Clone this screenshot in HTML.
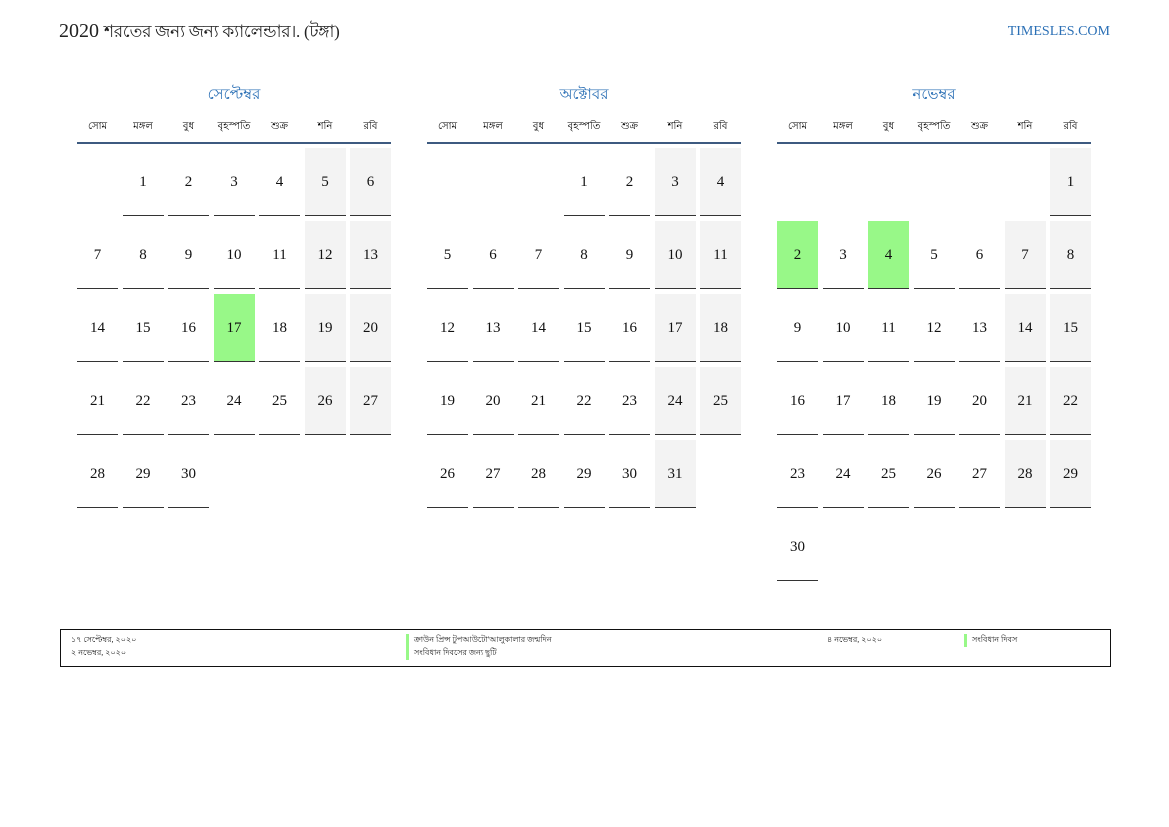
<!DOCTYPE html>
<html><head><meta charset="utf-8"><style>
body{margin:0;width:1169px;height:827px;background:#fff;position:relative;font-family:"Liberation Serif",serif;overflow:hidden}
.t{position:absolute;left:59px;top:19px;font-size:20px;color:#222;font-family:"Liberation Serif","Noto Sans CJK SC",serif;white-space:nowrap}
.t .b{font-size:17px;letter-spacing:-0.3px}
.site{position:absolute;right:59px;top:24px;font-size:14px;color:#2a6fb5}
.m{position:absolute;top:83px;width:314px}
.mt{text-align:center;color:#2a6fb5;font-size:15px;height:24px}
.wd{display:grid;grid-template-columns:repeat(7,41px);column-gap:4.5px;font-size:10px;text-align:center;height:35px;line-height:40px;border-bottom:2px solid #3d5a80;font-family:"Liberation Sans",sans-serif}
.g{display:grid;grid-template-columns:repeat(7,41px);column-gap:4.5px;row-gap:5px;grid-auto-rows:68px;margin-top:4px}
.g div{font-size:15px;text-align:center;line-height:68px;color:#111}
.g .d{border-bottom:1.5px solid #333}
.g .w{background:#f3f3f3}
.g .h{background:#98f888}
.leg{position:absolute;left:60px;top:629px;width:1049px;height:36px;border:1.5px solid #111;font-size:8px;color:#222}
.leg span{position:absolute}
.bar{border-left:3px solid #98f888;padding-left:5px}
</style></head><body>
<div class="t">2020 <span class="b">শরতের জন্য জন্য ক্যালেন্ডার।. (টঙ্গা)</span></div>
<div class="site">TIMESLES.COM</div>

<div class="m" style="left:77px"><div class="mt">সেপ্টেম্বর</div>
<div class="wd"><span>সোম</span><span>মঙ্গল</span><span>বুধ</span><span>বৃহস্পতি</span><span>শুক্র</span><span>শনি</span><span>রবি</span></div>
<div class="g">
<div></div><div class="d">1</div><div class="d">2</div><div class="d">3</div><div class="d">4</div><div class="d w">5</div><div class="d w">6</div>
<div class="d">7</div><div class="d">8</div><div class="d">9</div><div class="d">10</div><div class="d">11</div><div class="d w">12</div><div class="d w">13</div>
<div class="d">14</div><div class="d">15</div><div class="d">16</div><div class="d h">17</div><div class="d">18</div><div class="d w">19</div><div class="d w">20</div>
<div class="d">21</div><div class="d">22</div><div class="d">23</div><div class="d">24</div><div class="d">25</div><div class="d w">26</div><div class="d w">27</div>
<div class="d">28</div><div class="d">29</div><div class="d">30</div>
</div></div>

<div class="m" style="left:427px"><div class="mt">অক্টোবর</div>
<div class="wd"><span>সোম</span><span>মঙ্গল</span><span>বুধ</span><span>বৃহস্পতি</span><span>শুক্র</span><span>শনি</span><span>রবি</span></div>
<div class="g">
<div></div><div></div><div></div><div class="d">1</div><div class="d">2</div><div class="d w">3</div><div class="d w">4</div>
<div class="d">5</div><div class="d">6</div><div class="d">7</div><div class="d">8</div><div class="d">9</div><div class="d w">10</div><div class="d w">11</div>
<div class="d">12</div><div class="d">13</div><div class="d">14</div><div class="d">15</div><div class="d">16</div><div class="d w">17</div><div class="d w">18</div>
<div class="d">19</div><div class="d">20</div><div class="d">21</div><div class="d">22</div><div class="d">23</div><div class="d w">24</div><div class="d w">25</div>
<div class="d">26</div><div class="d">27</div><div class="d">28</div><div class="d">29</div><div class="d">30</div><div class="d w">31</div>
</div></div>

<div class="m" style="left:777px"><div class="mt">নভেম্বর</div>
<div class="wd"><span>সোম</span><span>মঙ্গল</span><span>বুধ</span><span>বৃহস্পতি</span><span>শুক্র</span><span>শনি</span><span>রবি</span></div>
<div class="g">
<div></div><div></div><div></div><div></div><div></div><div></div><div class="d w">1</div>
<div class="d h">2</div><div class="d">3</div><div class="d h">4</div><div class="d">5</div><div class="d">6</div><div class="d w">7</div><div class="d w">8</div>
<div class="d">9</div><div class="d">10</div><div class="d">11</div><div class="d">12</div><div class="d">13</div><div class="d w">14</div><div class="d w">15</div>
<div class="d">16</div><div class="d">17</div><div class="d">18</div><div class="d">19</div><div class="d">20</div><div class="d w">21</div><div class="d w">22</div>
<div class="d">23</div><div class="d">24</div><div class="d">25</div><div class="d">26</div><div class="d">27</div><div class="d w">28</div><div class="d w">29</div>
<div class="d">30</div>
</div></div>

<div class="leg">
<span style="left:10px;top:4px">১৭ সেপ্টেম্বর, ২০২০</span>
<span style="left:10px;top:17px">২ নভেম্বর, ২০২০</span>
<span class="bar" style="left:345px;top:4px">ক্রাউন প্রিন্স টুপআউটো'আলুকালার জন্মদিন</span>
<span class="bar" style="left:345px;top:17px">সংবিধান দিবসের জন্য ছুটি</span>
<span style="left:766px;top:4px">৪ নভেম্বর, ২০২০</span>
<span class="bar" style="left:903px;top:4px">সংবিধান দিবস</span>
</div>
</body></html>
